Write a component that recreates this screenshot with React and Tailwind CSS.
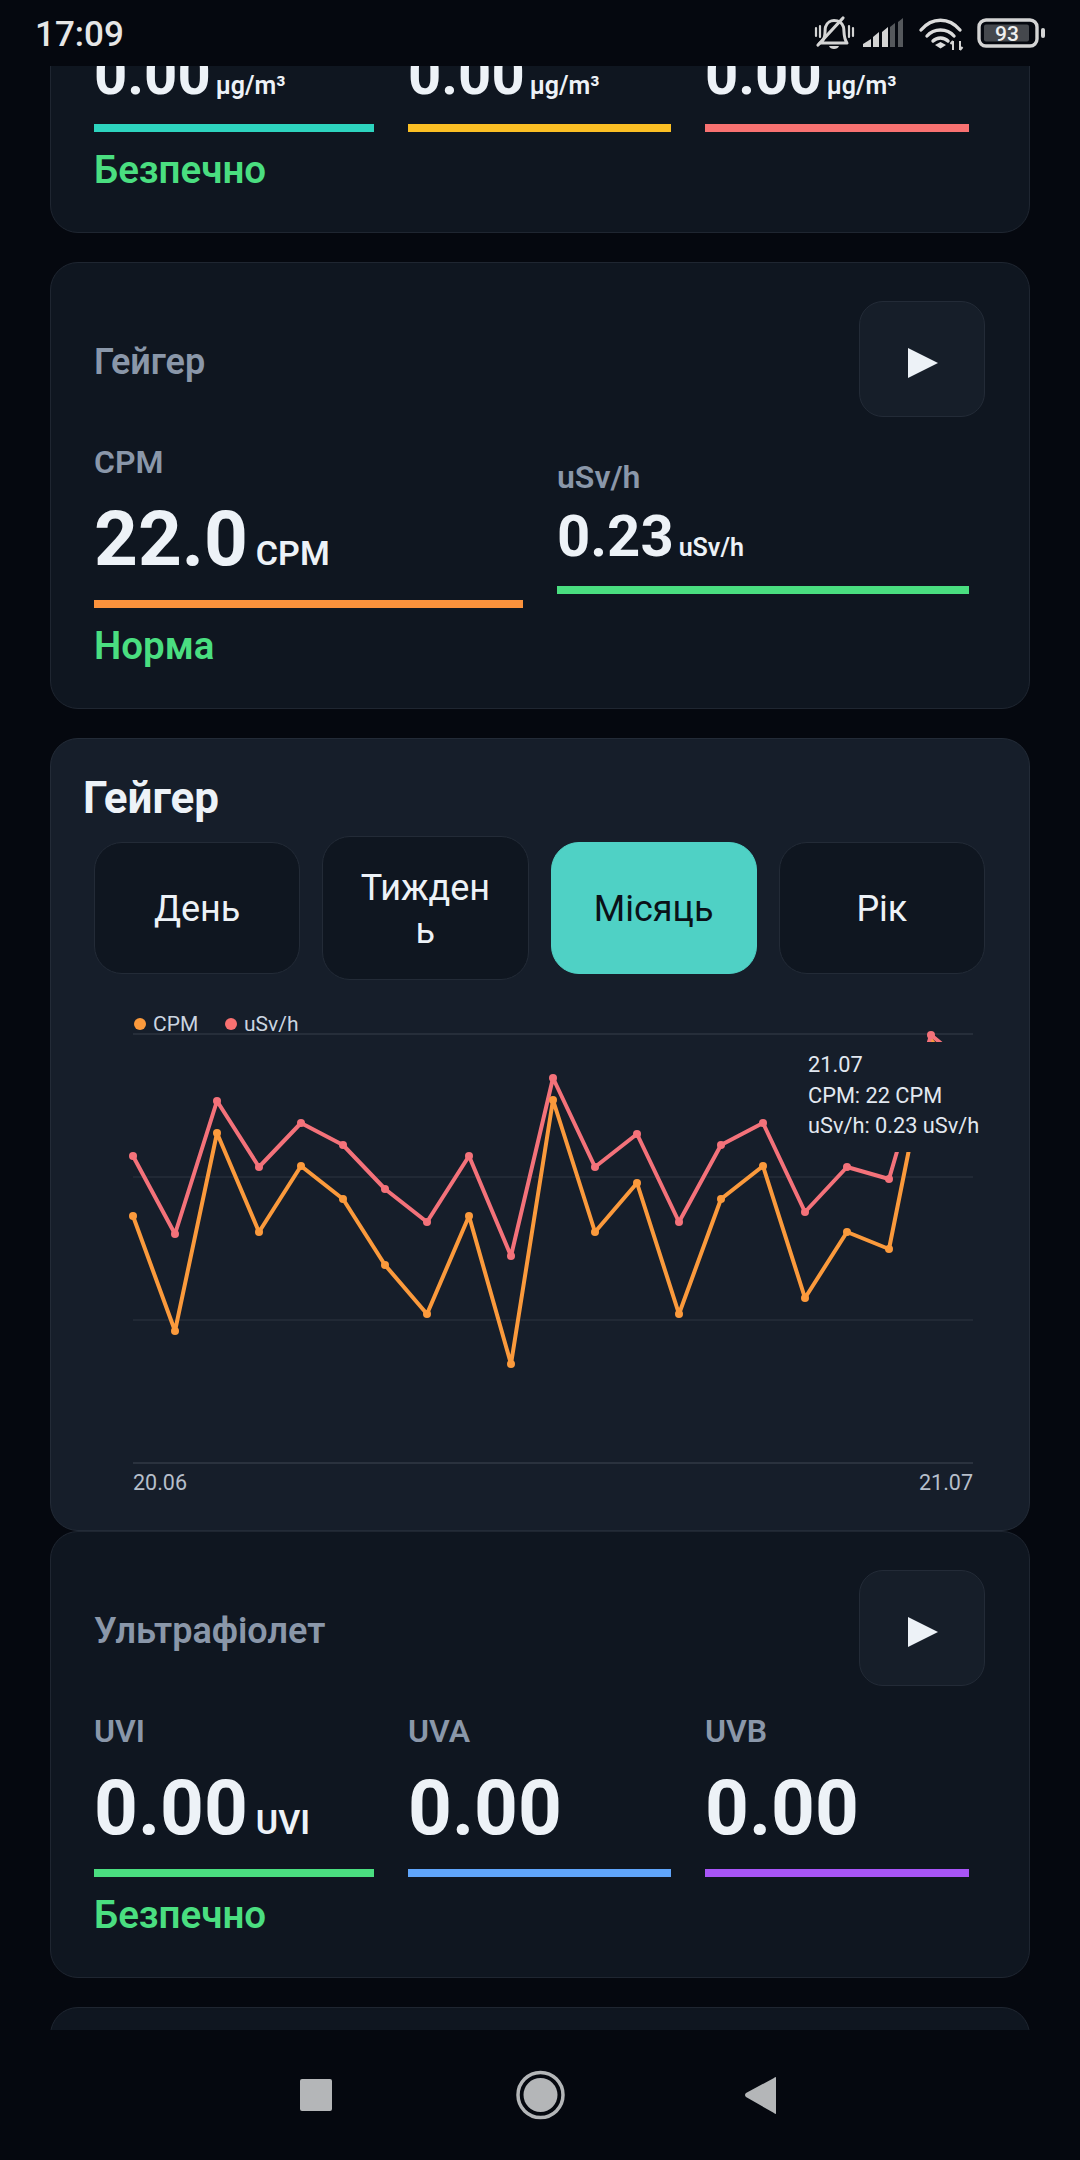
const FONT = "font-['Roboto','Noto_Sans',sans-serif]";

function Metric({ label, value, unit, color, big, width }) {
  return (
    <div className={`flex flex-col shrink-0 ${width}`}>
      {label && <div className="text-[32px] leading-[36px] font-semibold text-[#8a97a9]">{label}</div>}
      <div
        className={`flex items-baseline text-[#edf2f7] ${
          big ? "gap-[8px] mt-[17px] h-[84px]" : label ? "gap-[5px] mt-[9px] h-[64px]" : "gap-[5px] h-[64px]"
        }`}
      >
        <span className={`font-bold ${big ? "text-[76.5px] leading-[84px]" : "text-[58px] leading-[64px]"}`}>{value}</span>
        {unit && <span className={`font-semibold ${big ? "text-[34px] leading-[40px]" : "text-[25px] leading-[30px]"}`}>{unit}</span>}
      </div>
      <div className={`h-[8px] ${big ? "mt-[19px]" : "mt-[18px]"}`} style={{ backgroundColor: color }} />
    </div>
  );
}

function PlayButton() {
  return (
    <button className="w-[126px] h-[116px] rounded-[24px] bg-[#161e29] border border-[#232b37] flex items-center justify-center pt-[7px] pl-[2px]">
      <svg width="30" height="30" viewBox="0 0 30 30"><polygon points="0,0 30,15 0,30" fill="#edf2f7" /></svg>
    </button>
  );
}

const CARD = "mx-[50px] rounded-[28px] bg-[#0f1620] border border-[#1f2631]";
const STATUS = "mt-[16px] pb-[2px] text-[38.5px] leading-[44px] font-semibold text-[#4ade80]";

function SensorCard({ title, children, status, className = "" }) {
  return (
    <section className={`${CARD} pt-[38px] pb-[38px] pl-[43px] pr-[44px] ${className}`}>
      <div className="flex items-center justify-between h-[116px]">
        <h2 className="text-[36px] font-semibold text-[#8a97a9] pt-[5px]">{title}</h2>
        <PlayButton />
      </div>
      <div className="flex items-center gap-[34px] mt-[27px]">{children}</div>
      {status && <div className={STATUS}>{status}</div>}
    </section>
  );
}

const xs = Array.from({ length: 21 }, (_, i) => 133 + i * 42);
const red = [1156, 1234, 1101, 1167, 1123, 1145, 1189, 1222, 1156, 1256, 1078, 1167, 1134, 1222, 1145, 1123, 1212, 1167, 1179, 1035, 1070];
const orange = [1216, 1331, 1133, 1232, 1166, 1199, 1265, 1314, 1216, 1364, 1100, 1232, 1183, 1314, 1199, 1166, 1298, 1232, 1249, 1040, 1090];

function Chart() {
  const line = (arr) => arr.map((y, i) => `${xs[i]},${y}`).join(" ");
  return (
    <div className="relative mt-[29px] h-[491px] w-[891px] ml-[9px]">
      <svg width="891" height="491" viewBox="94 1009 891 491" className="block">
        {[1034, 1177, 1320].map((y) => (
          <line key={y} x1="133" x2="973" y1={y} y2={y} stroke="#2d3540" strokeWidth={y === 1034 ? 1.5 : 1} />
        ))}
        <line x1="133" x2="973" y1="1463" y2="1463" stroke="#2a323e" strokeWidth="2" />
        <circle cx="140" cy="1024" r="6" fill="#fb9a3c" />
        <text x="153" y="1031" fontSize="21" fill="#cbd5e0">CPM</text>
        <circle cx="231" cy="1024" r="6" fill="#f87171" />
        <text x="244" y="1031" fontSize="21" fill="#cbd5e0">uSv/h</text>
        <polyline points={line(orange)} fill="none" stroke="#fb9a3c" strokeWidth="4" strokeLinejoin="round" />
        <polyline points={line(red)} fill="none" stroke="#f4727a" strokeWidth="4" strokeLinejoin="round" />
        {orange.slice(0, 19).map((y, i) => <circle key={i} cx={xs[i]} cy={y} r="4" fill="#fb9a3c" />)}
        {red.slice(0, 20).map((y, i) => <circle key={i} cx={xs[i]} cy={y} r="4" fill="#f4727a" />)}
        <text x="133" y="1490" fontSize="21.5" fill="#b6bfca">20.06</text>
        <text x="973" y="1490" fontSize="21.5" fill="#b6bfca" textAnchor="end">21.07</text>
      </svg>
      <div className="absolute left-[704px] top-[33px] w-[196px] h-[110px] bg-[#161e2a] pl-[10px] pt-[8px] text-[21.75px] leading-[30.5px] text-[#e2e8f0] whitespace-nowrap">
        <div>21.07</div>
        <div>CPM: 22 CPM</div>
        <div>uSv/h: 0.23 uSv/h</div>
      </div>
    </div>
  );
}

function Tab({ children, active, tall }) {
  return (
    <button
      className={`rounded-[28px] border text-[36px] leading-[43px] break-all px-[34px] pt-[3px] flex items-center justify-center text-center ${
        tall ? "h-[144px]" : "h-[132px]"
      } ${active ? "bg-[#4fd1c5] border-[#4fd1c5] text-[#0a1118]" : "bg-[#0f1620] border-[#232b37] text-[#edf2f7]"}`}
    >
      {children}
    </button>
  );
}

function StatusIcons() {
  return (
    <div className="flex items-center mt-[2px]">
      <svg width="266" height="40" viewBox="780 14 266 40" className="block">
        {/* muted bell */}
        <g fill="none" stroke="#d4d4d4" strokeWidth="3" strokeLinecap="round" strokeLinejoin="round">
          <path d="M823 40 C826 36 824.5 30 825.5 27 C827 22.5 831 20.5 834 20.5 C838 20.5 842 22.5 843.5 27 C844.5 31 843 37 847 43 L820 43" />
          <path d="M818 45 L843 18" strokeWidth="3.2" />
          <path d="M816 28 V36 M820 26 V37 M849 26 V37 M853 28 V36" strokeWidth="2.2" />
        </g>
        <path d="M829 46 H839 C838 50 830 50 829 46 Z" fill="#d4d4d4" />
        {/* signal */}
        <polygon points="863,47 871,47 871,39 863,44" fill="#d4d4d4" />
        <polygon points="873,47 879,47 879,32 873,37" fill="#d4d4d4" />
        <polygon points="882,47 888,47 888,27 882,32" fill="#d4d4d4" />
        <polygon points="890,47 895,47 895,23 890,27" fill="#55585c" />
        <polygon points="898,47 903,47 903,18 898,22" fill="#55585c" />
        {/* wifi */}
        <g fill="none" stroke="#dcdcdc" strokeWidth="3.4" strokeLinecap="round">
          <path d="M921 30 C932 17 949 17 960 30" />
          <path d="M927 36 C934 28 947 28 954 36" />
          <path d="M933 41 C937 37 944 37 948 41" />
        </g>
        <polygon points="935,45 940.5,42 946,45 940.5,48.5" fill="#dcdcdc" />
        <path d="M953 41 V50 M950.5 44 L953 41 M960 41 V50 M960 50 L962.5 47" stroke="#d4d4d4" strokeWidth="2" fill="none" />
        {/* battery */}
        <rect x="979" y="20" width="58" height="26" rx="7" fill="none" stroke="#d4d4d4" strokeWidth="3.4" />
        <rect x="984" y="24.5" width="45" height="17" rx="2" fill="#45484d" />
        <rect x="1041" y="28" width="4" height="10" rx="2" fill="#d4d4d4" />
        <text x="1007" y="41" fontSize="21" fontWeight="500" fill="#f0f0f0" textAnchor="middle">93</text>
      </svg>
    </div>
  );
}

export default function App() {
  return (
    <div className={`w-[1080px] h-[2160px] flex flex-col overflow-hidden bg-[#05080f] ${FONT}`}>
      <header className="h-[66px] shrink-0 bg-[#05080f] flex items-center justify-between pl-[35px] pr-[34px] relative z-10">
        <span className="text-[35px] leading-[40px] font-medium text-[#e6e6e6] pt-[3px]">17:09</span>
        <StatusIcons />
      </header>

      <main className="flex-1 min-h-0 overflow-hidden">
        <div className="mt-[-34px] flex flex-col">
          <section className={`${CARD} pt-[9px] pb-[38px] pl-[43px] pr-[44px]`}>
            <div className="flex items-center gap-[34px]">
              <Metric value="0.00" unit="µg/m³" color="#2dd4bf" width="w-[280px]" />
              <Metric value="0.00" unit="µg/m³" color="#fbbf24" width="w-[263px]" />
              <Metric value="0.00" unit="µg/m³" color="#f87171" width="w-[264px]" />
            </div>
            <div className={STATUS}>Безпечно</div>
          </section>

          <SensorCard title="Гейгер" status="Норма" className="mt-[29px]">
            <Metric big label="CPM" value="22.0" unit="CPM" color="#fb923c" width="w-[429px]" />
            <Metric label="uSv/h" value="0.23" unit="uSv/h" color="#4ade80" width="w-[412px]" />
          </SensorCard>

          <section className="mt-[29px] mx-[50px] h-[793px] rounded-[28px] bg-[#161e2a] border border-[#232b37] pt-[33px] pl-[32px] pr-[34px]">
            <h2 className="text-[44px] leading-[52px] font-bold text-[#edf2f7]">Гейгер</h2>
            <div className="mt-[12px] ml-[11px] w-[891px] grid grid-cols-4 gap-[22px] items-center">
              <Tab>День</Tab>
              <Tab tall>Тиждень</Tab>
              <Tab active>Місяць</Tab>
              <Tab>Рік</Tab>
            </div>
            <div className="ml-[2px]">
              <Chart />
            </div>
          </section>

          <SensorCard title="Ультрафіолет" status="Безпечно">
            <Metric big label="UVI" value="0.00" unit="UVI" color="#4ade80" width="w-[280px]" />
            <Metric big label="UVA" value="0.00" color="#60a5fa" width="w-[263px]" />
            <Metric big label="UVB" value="0.00" color="#a855f7" width="w-[264px]" />
          </SensorCard>

          <section className={`${CARD} mt-[29px] h-[300px]`} />
        </div>
      </main>

      <nav className="h-[130px] shrink-0 bg-[#05080f] relative">
        <svg width="1080" height="130" viewBox="0 2030 1080 130" className="block">
          <rect x="300" y="2079" width="32" height="32" rx="2" fill="#b4b6b8" />
          <circle cx="540.5" cy="2095" r="22.5" fill="none" stroke="#b4b6b8" strokeWidth="3.5" />
          <circle cx="540.5" cy="2095" r="17" fill="#b4b6b8" />
          <path d="M776 2078 V2113 Q776 2115 774 2113 L746 2097 Q744 2095 746 2093 L774 2078 Q776 2076 776 2078 Z" fill="#b4b6b8" />
        </svg>
      </nav>
    </div>
  );
}
